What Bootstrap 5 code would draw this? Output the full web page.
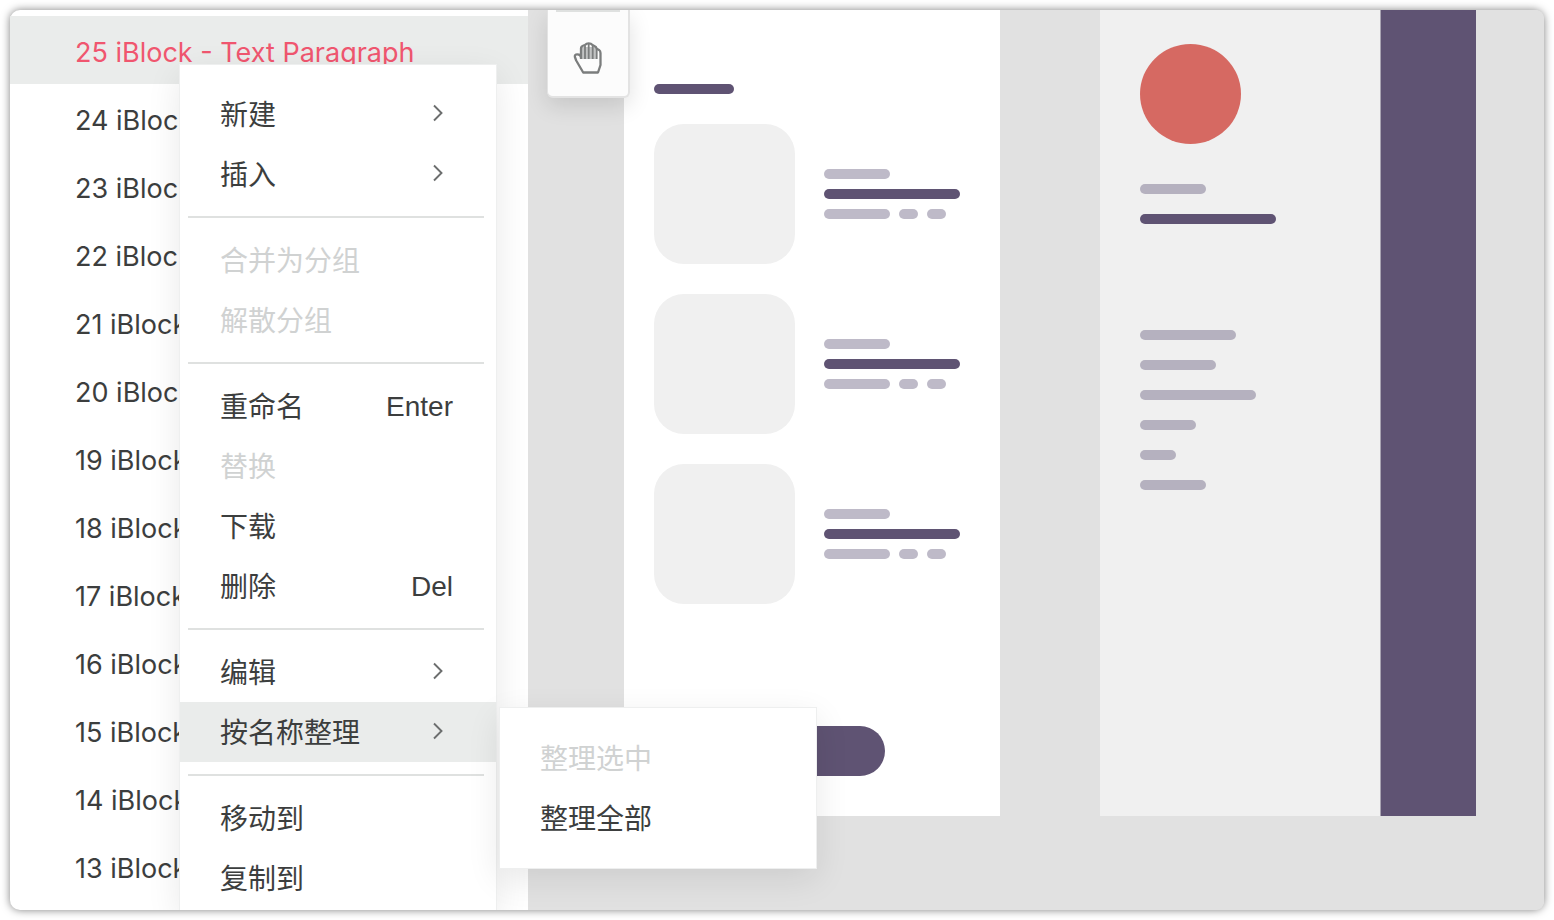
<!DOCTYPE html>
<html lang="zh-CN">
<head>
<meta charset="utf-8">
<meta name="viewport" content="width=device-width, initial-scale=1">
<title>iBlock</title>
<link href="https://cdn.jsdelivr.net/npm/bootstrap@5.3.0/dist/css/bootstrap.min.css" rel="stylesheet">
<style>
  :root { --ink: #3c3e3e; --plum: #5f5373; --mist: #bebac8; --hover: #eaeceb; --rule: #dfe1e0; --stage: #e1e1e1; }
  body { font-family: Inter, "Noto Sans CJK SC", sans-serif; font-size: 27px; line-height: 40px; color: var(--ink); background: #fff; }
  .app-frame { min-height: 100vh; padding: 10px; }
  .app-window { border-radius: 10px; box-shadow: 0 0 9px rgba(0,0,0,.5); background: #fff; }

  .layers { flex: 0 0 518px; height: calc(100vh - 20px); padding-top: 6px; }
  .layers .list-group-item { height: 68px; padding: 6px 24px 0 65px; border: 0; color: var(--ink); background: #fff; white-space: nowrap; }
  .layers .list-group-item.active { color: #f0566f; background: var(--hover); }

  .stage { background: var(--stage); padding: 0 68px 94px 96px; gap: 100px; }
  .artboard { flex: 0 0 376px; }
  .board-list { padding: 74px 30px 40px; background: #fff; }
  .board-rows { gap: 30px; padding-top: 30px; }
  .tile { width: 141px; height: 140px; border-radius: 30px; background: #f0f0f0; }
  .bar { height: 10px; border-radius: 5px; background: var(--mist); }
  .bar-dark { background: var(--plum); }
  .pill-gap { gap: 9px; }
  .bar-stack { width: 146px; gap: 10px; }
  .cta { width: 146px; height: 50px; border-radius: 25px; background: var(--plum); }
  .board-side { flex: 0 0 280px; padding: 34px 40px 0; background: #f0f0f0; }
  .board-side .bar:not(.bar-dark) { background: #b5b1bf; }
  .board-side-edge { border-left: 1px solid #a9a4b2; background: var(--plum); }
  .side-links { gap: 20px; padding-top: 106px; }
  .avatar-dot { width: 101px; height: 100px; border-radius: 50%; background: #d66962; }

  .toolbox { left: 19px; top: 0; width: 83px; height: 88px; border: 2px solid #e3e3e3; border-width: 0 2px 2px 1px; border-radius: 0 0 6px 6px; background: #fcfcfc; box-shadow: 0 8px 22px rgba(0,0,0,.12); }
  .toolbox hr { width: 64px; border-top: 2px solid var(--rule); opacity: 1; }
  .toolbox .btn { line-height: 1; margin-top: 28px; }

  .ctx { --bs-dropdown-min-width: 318px; width: 318px; padding: 19px 0; border: 1px solid #eeefef; border-radius: 0; font-size: 28px; color: var(--ink); background: #fff; box-shadow: 0 10px 32px rgba(0,0,0,.09); }
  .ctx-main { left: 169px; top: 54px; bottom: 0; border-bottom: 0; }
  .ctx-sub { left: 319px; top: 5px; padding: 20px 0; }
  .ctx .dropdown-item { height: 60px; padding: 2px 43px 0 40px; color: var(--ink); }
  .ctx .dropdown-item:hover, .ctx .dropdown-item.current { background: var(--hover); }
  .ctx .dropdown-item:disabled { color: #d0d2d2; }
  .ctx .dropdown-divider { margin: 12px 12px 12px 8px; border-top: 2px solid var(--rule); opacity: 1; }
  .ctx kbd { padding: 0; font-family: "Liberation Sans", sans-serif; font-size: 28px; color: inherit; background: none; }
  .ctx .dropdown-item svg { margin: 0 9px 4px 0; }
</style>
</head>
<body>
<svg class="d-none">
  <symbol id="chevron" viewBox="0 0 12 18"><path d="M2 1.500 9.500 9 2 16.500" fill="none" stroke="#6c6e6e" stroke-width="1.900"/></symbol>
</svg>
<div class="app-frame">
  <div class="app-window d-flex position-relative">
    <nav class="layers overflow-hidden rounded-start-3">
      <div class="list-group list-group-flush">
        <a href="#" class="list-group-item active d-flex align-items-center">25 iBlock - Text Paragraph</a>
        <a href="#" class="list-group-item d-flex align-items-center">24 iBlock</a>
        <a href="#" class="list-group-item d-flex align-items-center">23 iBlock</a>
        <a href="#" class="list-group-item d-flex align-items-center">22 iBlock</a>
        <a href="#" class="list-group-item d-flex align-items-center">21 iBlock</a>
        <a href="#" class="list-group-item d-flex align-items-center">20 iBlock</a>
        <a href="#" class="list-group-item d-flex align-items-center">19 iBlock</a>
        <a href="#" class="list-group-item d-flex align-items-center">18 iBlock</a>
        <a href="#" class="list-group-item d-flex align-items-center">17 iBlock</a>
        <a href="#" class="list-group-item d-flex align-items-center">16 iBlock</a>
        <a href="#" class="list-group-item d-flex align-items-center">15 iBlock</a>
        <a href="#" class="list-group-item d-flex align-items-center">14 iBlock</a>
        <a href="#" class="list-group-item d-flex align-items-center">13 iBlock</a>
      </div>
    </nav>

    <main class="stage d-flex flex-fill position-relative overflow-hidden rounded-end-3">
      <section class="artboard board-list d-flex flex-column">
        <div class="bar bar-dark" style="width:80px"></div>
        <div class="board-rows d-flex flex-column">
          <div class="d-flex align-items-center">
            <div class="tile"></div>
            <div class="bar-stack d-flex flex-column ms-auto">
              <div class="bar" style="width:66px"></div>
              <div class="bar bar-dark" style="width:136px"></div>
              <div class="pill-gap d-flex"><div class="bar" style="width:66px"></div><div class="bar" style="width:19px"></div><div class="bar" style="width:19px"></div></div>
            </div>
          </div>
          <div class="d-flex align-items-center">
            <div class="tile"></div>
            <div class="bar-stack d-flex flex-column ms-auto">
              <div class="bar" style="width:66px"></div>
              <div class="bar bar-dark" style="width:136px"></div>
              <div class="pill-gap d-flex"><div class="bar" style="width:66px"></div><div class="bar" style="width:19px"></div><div class="bar" style="width:19px"></div></div>
            </div>
          </div>
          <div class="d-flex align-items-center">
            <div class="tile"></div>
            <div class="bar-stack d-flex flex-column ms-auto">
              <div class="bar" style="width:66px"></div>
              <div class="bar bar-dark" style="width:136px"></div>
              <div class="pill-gap d-flex"><div class="bar" style="width:66px"></div><div class="bar" style="width:19px"></div><div class="bar" style="width:19px"></div></div>
            </div>
          </div>
        </div>
        <div class="cta mt-auto mx-auto"></div>
      </section>

      <section class="artboard d-flex">
        <div class="board-side">
          <div class="avatar-dot"></div>
          <div class="d-flex flex-column gap-3 pt-4">
            <div class="bar mt-3" style="width:66px"></div>
            <div class="bar bar-dark mt-1" style="width:136px"></div>
          </div>
          <div class="side-links d-flex flex-column">
            <div class="bar" style="width:96px"></div>
            <div class="bar" style="width:76px"></div>
            <div class="bar" style="width:116px"></div>
            <div class="bar" style="width:56px"></div>
            <div class="bar" style="width:36px"></div>
            <div class="bar" style="width:66px"></div>
          </div>
        </div>
        <div class="board-side-edge flex-fill"></div>
      </section>

      <div class="toolbox position-absolute d-flex flex-column align-items-center">
        <hr class="m-0">
        <button type="button" class="btn border-0 p-0" aria-label="抓手">
          <svg width="32" height="36" viewBox="0 0 32 36" fill="none" stroke="#7b7d7d" stroke-width="2.300" stroke-linejoin="round">
            <path d="M9 7h16v12H9z" fill="#c2c3c3" stroke="none"/>
            <path d="M9 19V8.500C9 7 10 6 11.500 5.500L13 5c1-1.200 2.200-1.700 3.700-1.700S19.500 3.800 20.500 5l1.500.7c1.500.6 2.500 1.500 2.800 3l2.200 1.200c1 .7 1.500 1.500 1.500 3V25L26 32.500H11.200L4.200 20.500 2.900 17c-.5-1.800.6-2.700 2.300-2.700C7.500 14.300 9 15.500 9 18"/>
            <path d="M13 6v13M16.700 4v15M20.700 6v13M24.700 9v10" stroke-width="1.800"/>
          </svg>
        </button>
      </div>
    </main>

    <div class="position-absolute top-0 bottom-0 start-0 end-0 overflow-hidden rounded-3 pe-none">
      <ul class="dropdown-menu show ctx ctx-main pe-auto">
        <li><button type="button" class="dropdown-item d-flex align-items-center justify-content-between">新建<svg width="12" height="18"><use href="#chevron"/></svg></button></li>
        <li><button type="button" class="dropdown-item d-flex align-items-center justify-content-between">插入<svg width="12" height="18"><use href="#chevron"/></svg></button></li>
        <li><hr class="dropdown-divider"></li>
        <li><button type="button" class="dropdown-item" disabled>合并为分组</button></li>
        <li><button type="button" class="dropdown-item" disabled>解散分组</button></li>
        <li><hr class="dropdown-divider"></li>
        <li><button type="button" class="dropdown-item d-flex align-items-center justify-content-between">重命名<kbd>Enter</kbd></button></li>
        <li><button type="button" class="dropdown-item" disabled>替换</button></li>
        <li><button type="button" class="dropdown-item">下载</button></li>
        <li><button type="button" class="dropdown-item d-flex align-items-center justify-content-between">删除<kbd>Del</kbd></button></li>
        <li><hr class="dropdown-divider"></li>
        <li><button type="button" class="dropdown-item d-flex align-items-center justify-content-between">编辑<svg width="12" height="18"><use href="#chevron"/></svg></button></li>
        <li class="position-relative">
          <button type="button" class="dropdown-item current d-flex align-items-center justify-content-between">按名称整理<svg width="12" height="18"><use href="#chevron"/></svg></button>
          <ul class="dropdown-menu show ctx ctx-sub">
            <li><button type="button" class="dropdown-item" disabled>整理选中</button></li>
            <li><button type="button" class="dropdown-item">整理全部</button></li>
          </ul>
        </li>
        <li><hr class="dropdown-divider"></li>
        <li><button type="button" class="dropdown-item">移动到</button></li>
        <li><button type="button" class="dropdown-item">复制到</button></li>
      </ul>
    </div>
  </div>
</div>
<script src="https://cdn.jsdelivr.net/npm/bootstrap@5.3.0/dist/js/bootstrap.bundle.min.js"></script>
</body>
</html>
